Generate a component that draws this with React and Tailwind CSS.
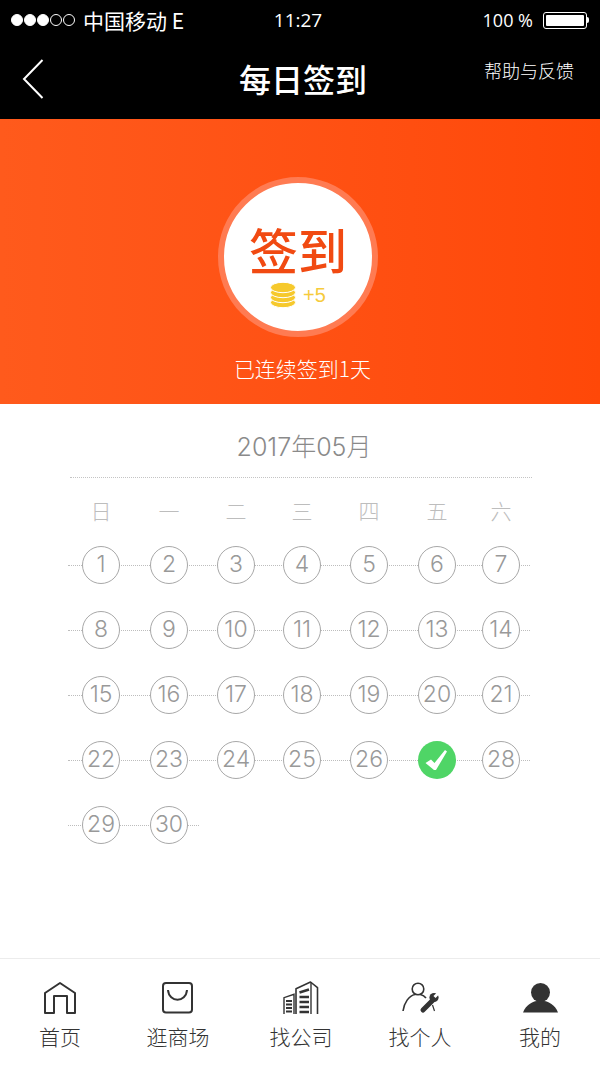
const cjk = { fontFamily: '"Noto Sans CJK SC", sans-serif' };

const weekdays = ["日", "一", "二", "三", "四", "五", "六"];
const colsClass = "grid grid-cols-[66px_70px_64px_68px_66px_70px_58px] ml-[68px] w-[462px]";

function BackIcon() {
  return (
    <svg width="22" height="40" viewBox="0 0 22 40" fill="none" stroke="#fff" strokeWidth="2">
      <path d="M20.5 1 L2 20 L20.5 39" />
    </svg>
  );
}

function HouseIcon() {
  return (
    <svg width="34" height="34" viewBox="0 0 34 34" fill="none" stroke="#333" strokeWidth="2" strokeLinejoin="round">
      <path d="M2 12 L17 2 L32 12 V32 H24 V15 H11 V32 H2 Z" />
    </svg>
  );
}

function BagIcon() {
  return (
    <svg width="34" height="34" viewBox="0 0 34 34" fill="none" stroke="#333" strokeWidth="2">
      <rect x="2" y="2" width="29" height="29.5" rx="3" />
      <path d="M7 9 C8 22 25 22 26 9" />
    </svg>
  );
}

function BuildingIcon() {
  return (
    <svg width="36" height="34" viewBox="0 0 36 34" fill="none" stroke="#333">
      <path d="M1 33 V16.7 L11 13.3 V33" strokeWidth="1.4" />
      <path d="M3 20 H9 M3 23.5 H9 M3 27 H9 M3 30.5 H9" strokeWidth="2" />
      <path d="M13 33 V7.7 L27.5 1 L34.5 6.7 V33" strokeWidth="1.6" strokeLinejoin="round" />
      <path d="M28 1.5 V33" strokeWidth="1.4" />
      <path d="M16.5 11.5 L26 8.5 M16.5 16 H26 M16.5 21 H26 M16.5 26 H26 M16.5 31 H26" strokeWidth="2.6" />
    </svg>
  );
}

function WorkerIcon() {
  return (
    <svg width="38" height="34" viewBox="0 0 38 34" fill="none" stroke="#333">
      <circle cx="17" cy="8" r="5.8" strokeWidth="1.6" />
      <path d="M2 30 C3 22 8 14.5 14 13.5" strokeWidth="1.6" />
      <path d="M19.5 13.5 C21.5 14 23.5 15 25 17" strokeWidth="1.6" />
      <path d="M22 29 L32 19" strokeWidth="5" strokeLinecap="round" />
      <circle cx="33" cy="16.5" r="4.6" fill="#333" stroke="none" />
      <path d="M33.5 16 L37.5 12" stroke="#fff" strokeWidth="3" />
      <path d="M31.5 24 L33.5 30" strokeWidth="1.2" />
    </svg>
  );
}

function PersonIcon() {
  return (
    <svg width="35" height="30" viewBox="0 0 35 30" fill="#333">
      <circle cx="17.5" cy="9.5" r="9.5" />
      <path d="M0 29.5 C3 22 9 18.5 14 18 H21 C26 18.5 32 22 35 29.5 Z" />
    </svg>
  );
}

function CoinsIcon() {
  return (
    <svg width="26" height="26" viewBox="0 0 26 26">
      {[20.5, 15.5, 10.5, 5.5].map((cy) => (
        <ellipse key={cy} cx="13" cy={cy} rx="12.5" ry="5.2" fill="#f6c92c" stroke="#fff" strokeWidth="1" />
      ))}
    </svg>
  );
}

function CheckIcon() {
  return (
    <svg width="24" height="22" viewBox="0 0 24 22" fill="#fff">
      <path d="M0.5 14 L6 10.5 L9.5 14 L20 1 L22 2.5 L11 21 L9 21 Z" />
    </svg>
  );
}

function Battery() {
  return (
    <div className="flex items-center">
      <div className="w-[44px] h-[17px] border border-white rounded-[3px] p-[2px]">
        <div className="w-full h-full bg-white rounded-[1px]" />
      </div>
      <div className="w-[2px] h-[6px] bg-white rounded-r-sm" />
    </div>
  );
}

function Day({ n, checked }) {
  if (checked) {
    return (
      <div className="mx-auto w-[38px] h-[38px] rounded-full bg-[#4fd566] flex items-center justify-center relative">
        <CheckIcon />
      </div>
    );
  }
  return (
    <div
      className="mx-auto w-[38px] h-[38px] rounded-full bg-white border border-[#a8a8a8] flex items-center justify-center text-[23px] font-light text-[#999] relative"
      style={{ fontFamily: "Inter, sans-serif" }}
    >
      {n}
    </div>
  );
}

function CalendarRow({ days, lineClass }) {
  return (
    <div className="relative h-[65px] flex items-center">
      <div className={"absolute left-[68px] top-1/2 border-t border-dotted border-[#bdbdbd] " + lineClass} />
      <div className={colsClass + " relative"}>
        {days.map((d, i) => (
          <Day key={i} n={d} checked={d === 27} />
        ))}
      </div>
    </div>
  );
}

const tabs = [
  { label: "首页", icon: <HouseIcon />, w: "w-[120px]" },
  { label: "逛商场", icon: <BagIcon />, w: "w-[116px]" },
  { label: "找公司", icon: <BuildingIcon />, w: "w-[130px]" },
  { label: "找个人", icon: <WorkerIcon />, w: "w-[108px]" },
  { label: "我的", icon: <PersonIcon />, w: "w-[126px] pl-[6px]" },
];

export default function App() {
  return (
    <div className="w-[600px] h-[1067px] bg-white flex flex-col overflow-hidden" style={cjk}>
      {/* status bar + nav */}
      <div className="bg-black text-white h-[119px] flex flex-col">
        <div className="h-[40px] px-[11px] flex items-center justify-between">
          <div className="flex items-center w-[200px]">
            <div className="flex gap-[1px] items-center">
              {[1, 1, 1, 0, 0].map((on, i) => (
                <span key={i} className={"w-[12px] h-[12px] rounded-full border border-white " + (on ? "bg-white" : "")} />
              ))}
            </div>
            <span className="ml-[8px] text-[21px] leading-none whitespace-nowrap">中国移动 E</span>
          </div>
          <span className="text-[19px] leading-none mr-[4px]" style={{ fontFamily: '"Open Sans", sans-serif' }}>11:27</span>
          <div className="flex items-center gap-[10px] w-[200px] justify-end">
            <span className="text-[18px] leading-none" style={{ fontFamily: '"Open Sans", sans-serif' }}>100 %</span>
            <Battery />
          </div>
        </div>
        <div className="flex-1 flex justify-between items-start">
          <div className="w-[120px] pl-[22px] pt-[19px]">
            <BackIcon />
          </div>
          <h1 className="text-[32px] leading-none pt-[22px] font-medium ml-[6px]">每日签到</h1>
          <div className="w-[120px] pt-[21px] pr-[26px] text-right text-[18px] leading-none whitespace-nowrap font-light">帮助与反馈</div>
        </div>
      </div>

      {/* hero */}
      <div className="h-[285px] bg-gradient-to-r from-[#ff5a1c] to-[#ff4808] flex flex-col items-center pt-[58px]">
        <div className="w-[160px] h-[160px] rounded-full bg-white border-[6px] border-[#ff7b52] mr-[4px] flex flex-col items-center pt-[41px]">
          <div className="text-[49px] leading-none text-[#f14a12] font-medium">签到</div>
          <div className="flex items-center gap-[7px] mt-[9px]">
            <CoinsIcon />
            <span className="text-[20px] text-[#f6cb3c] leading-none" style={{ fontFamily: '"Liberation Sans", sans-serif' }}>+5</span>
          </div>
        </div>
        <div className="text-[21px] text-white leading-none mt-[21px] ml-[5px] font-light">已连续签到1天</div>
      </div>

      {/* calendar */}
      <div className="flex-1">
        <div
          className="text-center text-[25px] leading-none text-[#8a8a8a] pt-[31px] ml-[8px] font-light"
          style={{ fontFamily: 'Inter, "Noto Sans CJK SC", sans-serif' }}
        >
          2017年05月
        </div>
        <div className="ml-[70px] w-[462px] mt-[17px] border-t border-dotted border-[#c4c4c4]" />
        <div className={colsClass + " mt-[22px] mb-[11px]"}>
          {weekdays.map((d) => (
            <div key={d} className="text-center text-[21px] leading-none text-[#bdbdbd] font-light">{d}</div>
          ))}
        </div>
        <CalendarRow days={[1, 2, 3, 4, 5, 6, 7]} lineClass="w-[462px]" />
        <CalendarRow days={[8, 9, 10, 11, 12, 13, 14]} lineClass="w-[462px]" />
        <CalendarRow days={[15, 16, 17, 18, 19, 20, 21]} lineClass="w-[462px]" />
        <CalendarRow days={[22, 23, 24, 25, 26, 27, 28]} lineClass="w-[462px]" />
        <CalendarRow days={[29, 30]} lineClass="w-[131px]" />
      </div>

      {/* tab bar */}
      <div className="h-[109px] border-t border-[#ececec] flex">
        {tabs.map((t) => (
          <div key={t.label} className={t.w + " flex flex-col items-center pt-[22px]"}>
            <div className="h-[34px] flex items-center justify-center">{t.icon}</div>
            <div className="text-[21px] leading-none text-[#333] mt-[11px] font-light">{t.label}</div>
          </div>
        ))}
      </div>
    </div>
  );
}
